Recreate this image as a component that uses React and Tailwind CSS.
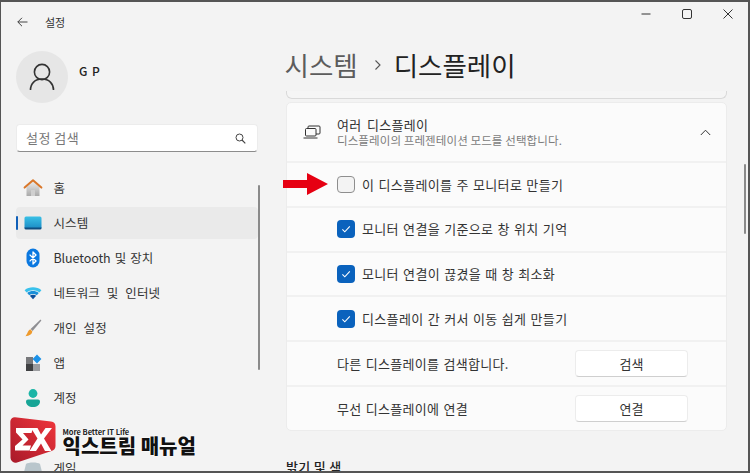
import React from "react";

const FONT = "[font-family:'Noto_Sans_CJK_KR','Noto_Sans',sans-serif]";

function HomeIcon() {
  return (
    <svg width="20" height="20" viewBox="0 0 20 20">
      <defs>
        <linearGradient id="hw" x1="0" y1="0" x2="0" y2="1"><stop offset="0" stopColor="#ececec" /><stop offset="1" stopColor="#a9a9a9" /></linearGradient>
      </defs>
      <path d="M3.5 9 10 3.2 16.5 9v9h-4.6v-5.4H8.1V18H3.5z" fill="url(#hw)" />
      <path d="M8.1 18v-5.4h3.8V18z" fill="#8d8d8d" opacity="0.35" />
      <path d="M1.6 9.6 10 2.2l8.4 7.4" fill="none" stroke="#d9772a" strokeWidth="2" strokeLinecap="round" strokeLinejoin="round" />
    </svg>
  );
}
function SystemIcon() {
  return (
    <svg width="20" height="16" viewBox="0 0 20 16">
      <defs>
        <linearGradient id="sy" x1="0" y1="0" x2="0" y2="1"><stop offset="0" stopColor="#39c0e6" /><stop offset="1" stopColor="#1a8ac4" /></linearGradient>
      </defs>
      <rect x="1.5" y="1.5" width="17" height="12.5" rx="1.5" fill="url(#sy)" />
      <path d="M1.5 12.400h17v.6a1.500 1.500 0 0 1-1.500 1.500H3A1.500 1.500 0 0 1 1.500 13z" fill="#0f4d80" />
    </svg>
  );
}
function BtIcon() {
  return (
    <svg width="16" height="20" viewBox="0 0 16 20">
      <rect x="1.5" y="0.5" width="13" height="19" rx="6.5" fill="#0a78e0" />
      <path d="M4.6 6.600 11 13 8 16V4l3 3-6.400 6.400" fill="none" stroke="#fff" strokeWidth="1.300" strokeLinejoin="round" />
    </svg>
  );
}
function WifiIcon() {
  return (
    <svg width="20" height="16" viewBox="0 0 20 16">
      <path d="M1.600 5.200C6 1.400 14 1.400 18.400 5.200L16.400 7.400C12.800 4.400 7.200 4.400 3.600 7.400z" fill="#38c1ec" />
      <path d="M4.200 8C7.600 5.400 12.400 5.400 15.800 8L13.800 10.200C11.600 8.600 8.400 8.600 6.200 10.200z" fill="#1a8fd8" />
      <path d="M6.800 10.800C8.600 9.500 11.400 9.500 13.200 10.800L10 14.200z" fill="#0b4f9c" />
    </svg>
  );
}
function BrushIcon() {
  return (
    <svg width="20" height="20" viewBox="0 0 20 20">
      <path d="M17.500 1.500 18.400 2.400 9.600 13 7.600 11z" fill="#8e8e92" />
      <path d="M7.200 11.300 9.400 13.400C8.800 16.400 6.600 17.800 2.400 18.200 4.400 16.600 4.400 12.800 7.200 11.300z" fill="#ee9a2c" />
    </svg>
  );
}
function AppsIcon() {
  return (
    <svg width="20" height="20" viewBox="0 0 20 20">
      <rect x="3" y="4" width="7" height="7" fill="#77787b" />
      <rect x="3" y="11" width="7" height="7" fill="#3f4042" />
      <rect x="10" y="11" width="7" height="7" fill="#9c9da0" />
      <path d="M14 1.600 18.400 6 14 10.400 9.600 6z" fill="#1c92e8" />
    </svg>
  );
}
function UserIcon() {
  return (
    <svg width="18" height="20" viewBox="0 0 18 20">
      <circle cx="9" cy="5.500" r="4.400" fill="#1bb5a6" />
      <path d="M2 13.400a2 2 0 0 1 2-2h10a2 2 0 0 1 2 2c0 3.400-3 5.600-7 5.600s-7-2.200-7-5.600z" fill="#17a596" />
    </svg>
  );
}
function GameIcon() {
  return (
    <svg width="20" height="16" viewBox="0 0 20 16">
      <path d="M3 4c2-2 12-2 14 0l2 8H1z" fill="#b9c6cc" />
    </svg>
  );
}

const NAV = [
  { label: "홈", icon: <HomeIcon /> },
  { label: "시스템", icon: <SystemIcon />, active: true },
  { label: "Bluetooth 및 장치", icon: <BtIcon />, cls: "tracking-[-0.1px] [word-spacing:1.5px]" },
  { label: "네트워크 및 인터넷", icon: <WifiIcon /> },
  { label: "개인 설정", icon: <BrushIcon /> },
  { label: "앱", icon: <AppsIcon /> },
  { label: "계정", icon: <UserIcon /> },
  { label: "", icon: null },
  { label: "게임", icon: <GameIcon /> },
];

function NavRow({ label, icon, active, cls }) {
  return (
    <div className={`relative flex items-center h-[32px] mb-[3px] ml-[14.5px] mr-[28px] rounded ${active ? "bg-[#eaeaea]" : ""}`}>
      {active && <span className="absolute left-0 top-[9px] w-[2.5px] h-[14px] rounded bg-[#0f5fb8]" />}
      <span className="flex items-center justify-center w-[20px] h-[20px] ml-[7px]">{icon}</span>
      <span className={`ml-[11px] text-[12.5px] text-[#333] whitespace-nowrap ${cls || "tracking-[0.1px] [word-spacing:4px]"}`}>{label}</span>
    </div>
  );
}

function Check({ checked }) {
  return checked ? (
    <span className="flex items-center justify-center w-[17.5px] h-[17.5px] rounded-[4px] bg-[#0a62bd] shrink-0">
      <svg width="10" height="10" viewBox="0 0 10 10"><path d="M1.400 5.400 3.800 7.800 8.800 2.400" fill="none" stroke="#fff" strokeWidth="1.100" /></svg>
    </span>
  ) : (
    <span className="w-[17.5px] h-[17.5px] rounded-[4px] border border-[#8e8e8e] bg-[#f3f3f3] shrink-0" />
  );
}

function CheckRow({ label, checked }) {
  return (
    <div className="flex items-center h-[44.8px] pl-[50px] border-t-2 border-[#f1f1f1]">
      <Check checked={checked} />
      <span className="ml-[7.5px] text-[13px] text-[#333] whitespace-nowrap tracking-[0.35px] [word-spacing:0.9px]">{label}</span>
    </div>
  );
}

function ButtonRow({ label, button }) {
  return (
    <div className="flex items-center justify-between h-[44.8px] pl-[50px] pr-[38px] border-t-2 border-[#f1f1f1]">
      <span className="text-[13px] text-[#333] whitespace-nowrap tracking-[0.3px] [word-spacing:1px]">{label}</span>
      <span className="flex items-center justify-center w-[113px] h-[27px] rounded bg-white border border-[#ececec] border-b-[#cfcfcf] text-[13px] text-[#333]">{button}</span>
    </div>
  );
}

export default function App() {
  return (
    <div className={`relative w-[750px] h-[473px] overflow-hidden bg-[#f3f3f3] border-t-2 border-l-[1.5px] border-r-2 border-b-2 border-[#555] flex ${FONT}`}>
      {/* Sidebar */}
      <aside className="relative w-[285px] shrink-0">
        <div className="flex items-center h-[40px] pl-[16px]">
          <svg width="11" height="10" viewBox="0 0 11 10"><path d="M10.500 5H.8M5 .8.8 5 5 9.200" fill="none" stroke="#444" strokeWidth="1" /></svg>
          <span className="ml-[17px] text-[11px] text-[#333]">설정</span>
        </div>
        <div className="flex mt-[9px] pl-[15px]">
          <span className="flex items-center justify-center w-[52px] h-[52px] rounded-full bg-[#e6e6e6]">
            <svg width="26" height="28" viewBox="0 0 26 28"><circle cx="13" cy="9" r="7.600" fill="none" stroke="#333" strokeWidth="1.600" /><path d="M1.500 27c0-6.400 4.500-11 11.500-11s11.500 4.600 11.500 11" fill="none" stroke="#333" strokeWidth="1.600" /></svg>
          </span>
          <span className="ml-[11px] mt-[11px] text-[12px] font-medium text-[#222] tracking-[1px]">G P</span>
        </div>
        <div className="flex items-center justify-between w-[242px] h-[28px] mt-[21px] ml-[15px] pl-[9px] pr-[11px] rounded bg-white border border-[#ececec] border-b-[#8c8c8c]">
          <span className="text-[13px] text-[#777] tracking-[0.5px]">설정 검색</span>
          <svg width="11" height="11" viewBox="0 0 11 11"><circle cx="4.500" cy="4.500" r="3.500" fill="none" stroke="#444" strokeWidth="1" /><path d="M7 7l3.300 3.300" stroke="#444" strokeWidth="1.200" /></svg>
        </div>
        <nav className="mt-[20px]">
          {NAV.map((n) => <NavRow key={n.label || "spacer"} {...n} />)}
        </nav>
        <span className="absolute left-[256.5px] top-[183px] w-[2px] h-[185px] rounded bg-[#8a8a8a]" />
      </aside>

      {/* Main */}
      <main className="flex-1 min-w-0 pr-[21px]">
        <div className="flex items-center justify-end h-[24px] text-[#333]">
          <div className="flex items-center gap-[31px] mr-[-6px]">
            <svg width="10" height="10" viewBox="0 0 10 10"><path d="M.5 5h9" stroke="#333" strokeWidth="1" /></svg>
            <svg width="10" height="10" viewBox="0 0 10 10"><rect x=".5" y=".5" width="9" height="9" rx="1.500" fill="none" stroke="#333" strokeWidth="1" /></svg>
            <svg width="10" height="10" viewBox="0 0 10 10"><path d="M.5.5l9 9M9.500.5l-9 9" stroke="#333" strokeWidth="1" /></svg>
          </div>
        </div>
        <div className="flex items-center h-[51px] mt-[13.5px] ml-[-1.5px] text-[26.5px] leading-none whitespace-nowrap">
          <span className="text-[#5c5c5c]">시스템</span>
          <svg className="ml-[16px] mr-[12px]" width="8" height="12" viewBox="0 0 8 12"><path d="M1.500 1.500 6 6l-4.500 4.500" fill="none" stroke="#555" strokeWidth="1.100" /></svg>
          <span className="text-[#222]">디스플레이</span>
        </div>
        <div className="h-[8px] rounded-b-[6px] border border-t-0 border-[#d9d9d9] bg-[#f5f5f5]" />
        <section className="mt-[3.5px] rounded-[5px] bg-[#fbfbfb] border border-[#ececec]">
          <div className="flex items-center h-[58px] pl-[15.5px] pr-[15px]">
            <svg width="18" height="14" viewBox="0 0 18 14"><path d="M5 3V2a1 1 0 0 1 1-1h10a1 1 0 0 1 1 1v6a1 1 0 0 1-1 1h-3" fill="none" stroke="#333" strokeWidth="1" /><rect x="2.500" y="3.500" width="10.500" height="7.500" rx="1" fill="#fbfbfb" stroke="#333" strokeWidth="1" /><path d="M.5 13h14" stroke="#333" strokeWidth="1" /></svg>
            <div className="ml-[16.5px] flex-1 min-w-0">
              <div className="text-[13px] leading-[17px] text-[#333] tracking-[0.35px] [word-spacing:2px]">여러 디스플레이</div>
              <div className="text-[11.5px] leading-[15px] text-[#7c7c7c] tracking-[0.1px]">디스플레이의 프레젠테이션 모드를 선택합니다.</div>
            </div>
            <svg width="11" height="7" viewBox="0 0 11 7"><path d="M.8 6 5.500 1.200 10.200 6" fill="none" stroke="#333" strokeWidth="1" /></svg>
          </div>
          <CheckRow label="이 디스플레이를 주 모니터로 만들기" />
          <CheckRow label="모니터 연결을 기준으로 창 위치 기억" checked />
          <CheckRow label="모니터 연결이 끊겼을 때 창 최소화" checked />
          <CheckRow label="디스플레이 간 커서 이동 쉽게 만들기" checked />
          <ButtonRow label="다른 디스플레이를 검색합니다." button="검색" />
          <ButtonRow label="무선 디스플레이에 연결" button="연결" />
        </section>
        <div className="mt-[27px] text-[13px] font-medium leading-[17px] text-[#222] tracking-[0.3px]">밝기 및 색</div>
      </main>

      {/* Content scrollbar */}
      <span className="absolute right-[2px] top-[162px] w-[2px] h-[70px] rounded bg-[#8a8a8a]" />

      {/* Red arrow annotation */}
      <svg className="absolute left-[281.5px] top-[171px]" width="45" height="22" viewBox="0 0 45 22">
        <path d="M0 7h24V0l21 11-21 11v-7H0z" fill="#e60012" />
      </svg>

      {/* Watermark logo */}
      <div className="absolute left-[8.5px] top-[415px] flex items-start">
        <svg width="46" height="46" viewBox="0 0 46 46">
          <defs>
            <linearGradient id="lg" x1="1" y1="0" x2="0" y2="1"><stop offset="0" stopColor="#f0353b" /><stop offset="1" stopColor="#a81a2a" /></linearGradient>
          </defs>
          <path d="M5 .3 41 4.500a5 5 0 0 1 4.500 5L45.500 29c0 2.600-1.500 4.200-4 5L7 45.500a5 5 0 0 1-6.500-4.500L.3 5A4.500 4.500 0 0 1 5 .3z" fill="url(#lg)" />
          <path d="M6 11H23l-1.500 5H13l5.500 6.500-6 6h8.500l-1.500 5H5v-4.500l7.500-6.500L6 15.500z" fill="#fff" />
          <path d="M21 11h6.500l3.500 6.500 4.500-6.500h6.500l-8 10.500 7.500 12.500h-6.500l-4-7.500-5 7.500h-6.500l8-12.500z" fill="#fff" />
        </svg>
        <div className="ml-[7px] mt-[9px] [text-shadow:0_0_2px_#fff,0_0_2px_#fff]">
          <div className="text-[7.5px] leading-[11px] font-bold text-[#222] tracking-[-0.05px] whitespace-nowrap">More Better IT Life</div>
          <div className="text-[20px] leading-[18px] font-black text-[#111] whitespace-nowrap">익스트림 매뉴얼</div>
        </div>
      </div>
    </div>
  );
}
